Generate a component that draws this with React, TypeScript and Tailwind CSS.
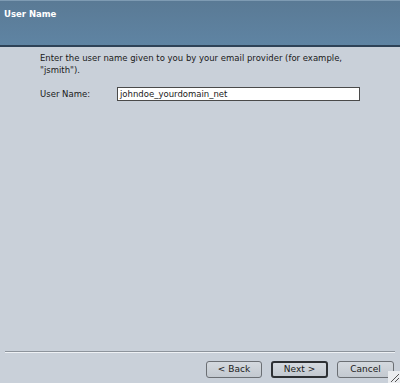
export default function App() {
  return (
    <div className="flex h-[383px] w-[400px] flex-col overflow-hidden bg-[#c9d0d9] font-['DejaVu_Sans',sans-serif] text-[#1a1a1a]">
      <div className="h-[47px] border-t border-[#7e9bb3] border-b-2 border-b-[#2e4257] bg-gradient-to-b from-[#5a7a95] to-[#5f84a3] px-[4px] pt-[7px]">
        <h1 className="text-[8.5px] font-bold text-white">User Name</h1>
      </div>

      <div className="flex flex-1 flex-col pl-[40px] pr-[30px] pt-[5px]">
        <p className="text-[8.5px] leading-[12px]">
          Enter the user name given to you by your email provider (for example, "jsmith").
        </p>
        <div className="mt-[11px] flex items-center">
          <label className="w-[77px] text-[8.5px]">User Name:</label>
          <div className="flex h-[14px] w-[243px] items-center border border-[#4a4a4a] bg-white px-[2px] text-[8.5px]">
            johndoe_yourdomain_net
          </div>
        </div>
      </div>

      <div className="mx-[5px] h-[2px] border-t border-[#8d949c] border-b border-b-[#eef1f5]" />

      <div className="relative flex justify-end gap-[9px] px-[6px] pb-[5px] pt-[8px]">
        <button className="h-[17px] w-[56px] rounded-[3px] border border-[#6b6f74] bg-gradient-to-b from-[#d4d9df] to-[#c3c9d0] text-[9px]">
          &lt; Back
        </button>
        <button className="h-[17px] w-[57px] rounded-[3px] border-2 border-[#2d3034] bg-gradient-to-b from-[#d4d9df] to-[#c3c9d0] text-[9px]">
          Next &gt;
        </button>
        <button className="h-[17px] w-[57px] rounded-[3px] border border-[#6b6f74] bg-gradient-to-b from-[#d4d9df] to-[#c3c9d0] text-[9px]">
          Cancel
        </button>
        <svg className="absolute bottom-0 right-0" width="12" height="12" viewBox="0 0 12 12">
          <rect width="12" height="12" fill="#ebedf0" />
          <path d="M3 11 L11 3 M7 11 L11 7" stroke="#555" strokeWidth="1" />
        </svg>
      </div>
    </div>
  );
}
